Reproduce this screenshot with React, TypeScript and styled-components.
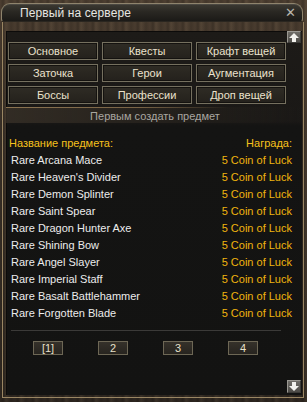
import React from "react";
import styled, { createGlobalStyle } from "styled-components";

const Global = createGlobalStyle`
  html, body { margin: 0; padding: 0; background: #000; }
  body { font-family: "Liberation Sans", Arial, sans-serif; }
  * { box-sizing: border-box; }
`;

const Window = styled.div`
  width: 307px;
  height: 402px;
  padding: 3px 0 4px 0;
  display: flex;
  flex-direction: column;
  background:
    repeating-linear-gradient(90deg,
      rgba(0,0,0,0.0) 0px, rgba(0,0,0,0.18) 3px, rgba(255,220,170,0.05) 6px, rgba(0,0,0,0.12) 11px, rgba(0,0,0,0) 15px),
    linear-gradient(180deg, #4d3f31 0%, #3a3027 30%, #2e2720 100%);
  font-family: "Liberation Sans", Arial, sans-serif;
`;

const TitleBar = styled.div`
  height: 19px;
  margin: 0 4px 0 1px;
  display: flex;
  align-items: center;
  justify-content: space-between;
  padding: 0 6px 0 18px;
  border: 1px solid #8f846d;
  border-bottom-color: #2a2620;
  border-radius: 9px 9px 3px 3px;
  background: linear-gradient(180deg, #3d3a33 0%, #2a2823 45%, #1b1a17 100%);
  box-shadow: inset 0 1px 0 rgba(255,255,255,0.08);
`;

const Title = styled.span`
  color: #e6e6e2;
  font-size: 12px;
  line-height: 14px;
  letter-spacing: 0.1px;
`;

const Close = styled.span`
  color: #b9b5ac;
  font-size: 13px;
  line-height: 13px;
  font-family: "DejaVu Sans", sans-serif;
`;

const Body = styled.div`
  flex: 1;
  margin: 0 3px 0 2px;
  padding: 9px 1px 2px 3px;
  border: 1px solid #9a8663;
  border-top: none;
  display: flex;
`;

const Panel = styled.div`
  position: relative;
  flex: 1;
  padding: 11px 0 0 2px;
  background: linear-gradient(180deg, #1d1b18 0px, #1a1816 90px, #141413 95px, #131312 100%);
  box-shadow: inset 1px 0 0 #0c0b0a, inset 0 1px 0 #0c0b0a;
  display: flex;
  flex-direction: column;
`;

const Grid = styled.div`
  width: 278px;
  display: grid;
  grid-template-columns: repeat(3, 90px);
  grid-auto-rows: 18px;
  gap: 4px;
`;

const TabButton = styled.div`
  display: flex;
  align-items: center;
  justify-content: center;
  border: 1px solid #75705f;
  background: linear-gradient(180deg, #2f2c25 0%, #24211c 100%);
  box-shadow: inset 0 0 0 1px #14120f;
  color: #ebe2cd;
  font-size: 11px;
  line-height: 12px;
`;

const SubHeader = styled.div`
  margin: 3px 0 0 -2px;
  height: 16px;
  width: 296px;
  display: flex;
  align-items: center;
  justify-content: center;
  color: #a9a6a0;
  font-size: 11px;
  line-height: 12px;
  background: linear-gradient(90deg, rgba(60,52,42,0.7), rgba(40,36,30,0.4) 70%, rgba(30,28,24,0));
  border-top: 1px solid transparent;
  border-image: linear-gradient(90deg, #8b7350 0%, #7a6446 45%, rgba(100,80,60,0) 75%) 1;
  padding-left: 2px;
`;

const Table = styled.div`
  margin: 11px 10px 0 1px;
  display: flex;
  flex-direction: column;
`;

const Row = styled.div<{ $header?: boolean }>`
  height: 17px;
  display: flex;
  align-items: center;
  justify-content: space-between;
  padding-left: ${(p) => (p.$header ? "0" : "2px")};
  font-size: 11px;
  line-height: 12px;
`;

const Name = styled.span<{ $header?: boolean }>`
  color: ${(p) => (p.$header ? "#f6c01c" : "#ececec")};
`;

const Reward = styled.span<{ $header?: boolean }>`
  color: ${(p) => (p.$header ? "#f6c01c" : "#f0b40e")};
`;

const Separator = styled.div`
  margin: 9px 0 0 3px;
  width: 270px;
  height: 1px;
  background: #3b3a38;
`;

const Pager = styled.div`
  margin-top: 10px;
  padding-left: 25px;
  display: flex;
  gap: 35px;
`;

const PageButton = styled.div`
  width: 30px;
  height: 14px;
  display: flex;
  align-items: center;
  justify-content: center;
  border: 1px solid #6d6755;
  background: linear-gradient(180deg, #35312a 0%, #27241f 100%);
  color: #e8e0ca;
  font-size: 11px;
  line-height: 12px;
`;

const ScrollButton = styled.div<{ $down?: boolean }>`
  position: absolute;
  right: 1px;
  ${(p) => (p.$down ? "bottom: 2px; height: 13px;" : "top: 0; height: 12px;")}
  width: 14px;
  display: flex;
  align-items: center;
  justify-content: center;
  border: 1px solid #9a9892;
  border-right-color: #3c3b38;
  border-bottom-color: #3c3b38;
  background: linear-gradient(180deg, #6f6d68 0%, #4d4b47 100%);
`;

const Arrow = ({ down }: { down?: boolean }) => (
  <svg width="10" height="9" viewBox="0 0 10 9" style={{ transform: down ? "rotate(180deg)" : undefined }}>
    <path d="M5 0 L10 5 L7 5 L7 9 L3 9 L3 5 L0 5 Z" fill="#f2f2ee" />
  </svg>
);

const tabs = ["Основное", "Квесты", "Крафт вещей", "Заточка", "Герои", "Аугментация", "Боссы", "Профессии", "Дроп вещей"];

const items = [
  "Rare Arcana Mace",
  "Rare Heaven's Divider",
  "Rare Demon Splinter",
  "Rare Saint Spear",
  "Rare Dragon Hunter Axe",
  "Rare Shining Bow",
  "Rare Angel Slayer",
  "Rare Imperial Staff",
  "Rare Basalt Battlehammer",
  "Rare Forgotten Blade",
];

const pages = ["[1]", "2", "3", "4"];

export default function App() {
  return (
    <>
      <Global />
      <Window>
        <TitleBar>
          <Title>Первый на сервере</Title>
          <Close>✕</Close>
        </TitleBar>
        <Body>
          <Panel>
            <Grid>
              {tabs.map((t) => (
                <TabButton key={t}>{t}</TabButton>
              ))}
            </Grid>
            <SubHeader>Первым создать предмет</SubHeader>
            <Table>
              <Row $header>
                <Name $header>Название предмета:</Name>
                <Reward $header>Награда:</Reward>
              </Row>
              {items.map((it) => (
                <Row key={it}>
                  <Name>{it}</Name>
                  <Reward>5 Coin of Luck</Reward>
                </Row>
              ))}
            </Table>
            <Separator />
            <Pager>
              {pages.map((p) => (
                <PageButton key={p}>{p}</PageButton>
              ))}
            </Pager>
            <ScrollButton>
              <Arrow />
            </ScrollButton>
            <ScrollButton $down>
              <Arrow down />
            </ScrollButton>
          </Panel>
        </Body>
      </Window>
    </>
  );
}
